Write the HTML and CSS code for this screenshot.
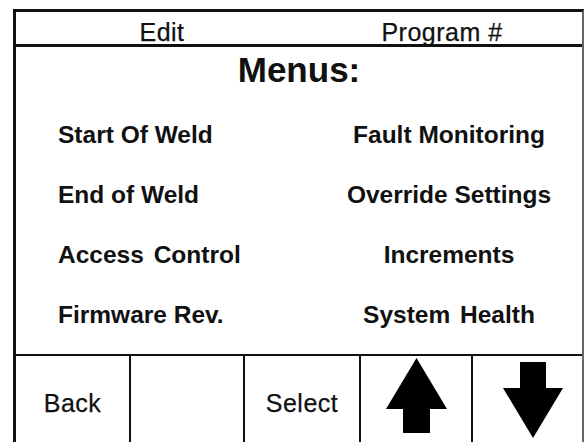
FILE: index.html
```html
<!DOCTYPE html>
<html>
<head>
<meta charset="utf-8">
<link rel="stylesheet" href="styles.css">
</head>
<body>
<div class="screen">
  <div class="header">
    <div class="hcell">Edit</div>
    <div class="hcell">Program #</div>
  </div>
  <div class="title">Menus:</div>
  <div class="menu">
    <div class="item left">Start Of Weld</div>
    <div class="item right">Fault Monitoring</div>
    <div class="item left">End of Weld</div>
    <div class="item right">Override Settings</div>
    <div class="item left wide">Access Control</div>
    <div class="item right">Increments</div>
    <div class="item left">Firmware Rev.</div>
    <div class="item right wide">System Health</div>
  </div>
  <div class="buttons">
    <div class="btn">Back</div>
    <div class="btn"></div>
    <div class="btn">Select</div>
    <div class="btn arrow up">
      <svg width="61" height="76" viewBox="0 0 61 76"><polygon points="30.5,0 61,51 44,51 44,75 17,75 17,51 0,51" fill="#000"/></svg>
    </div>
    <div class="btn arrow down">
      <svg width="60" height="76" viewBox="0 0 60 76"><polygon points="17,0 43,0 43,26 60,26 30,76 0,26 17,26" fill="#000"/></svg>
    </div>
  </div>
</div>
</body>
</html>
```
FILE: styles.css
```css
html, body {
  margin: 0;
  padding: 0;
  background: #fff;
  overflow: hidden;
}
body {
  width: 585px;
  height: 442px;
  font-family: "Liberation Sans", Arial, sans-serif;
  color: #111;
}
.screen {
  margin: 9px 0 0 13px;
  width: 566px;
  height: 433px;
  border-top: 3px solid #111;
  border-left: 3px solid #111;
  border-right: 2px solid #666;
  display: flex;
  flex-direction: column;
}
.header {
  display: grid;
  grid-template-columns: 1fr 1fr;
  padding-left: 6px;
  border-bottom: 3px solid #111;
  box-sizing: border-box;
  height: 35px;
}
.hcell {
  text-align: center;
  font-size: 25px;
  letter-spacing: 0.5px;
  padding-top: 8px;
  line-height: 24px;
  -webkit-text-stroke: 0.25px #111;
}
.title {
  margin-top: 3px;
  text-align: center;
  font-weight: bold;
  font-size: 35px;
  line-height: 40px;
}
.menu {
  margin-top: 15px;
  display: grid;
  grid-template-columns: 300px 1fr;
  grid-auto-rows: 60px;
  font-weight: bold;
  font-size: 24.5px;
  line-height: 60px;
  white-space: nowrap;
}
.item.left {
  padding-left: 42px;
}
.item.right {
  text-align: center;
}
.item.wide {
  word-spacing: 3px;
}
.buttons {
  margin-top: 9px;
  border-top: 2px solid #111;
  flex: 1;
  display: grid;
  grid-template-columns: 113px 114px 116px 112px 111px;
}
.btn {
  display: flex;
  align-items: center;
  justify-content: center;
  font-size: 25px;
  letter-spacing: 0.5px;
  padding-top: 6px;
  box-sizing: border-box;
  border-left: 2px solid #111;
  -webkit-text-stroke: 0.25px #111;
}
.btn:first-child {
  border-left: none;
}
.btn.arrow {
  padding-top: 0;
}
.btn.up {
  padding-bottom: 10px;
}
.btn.down {
  padding-left: 11px;
  padding-bottom: 2px;
}
svg {
  display: block;
}
```
